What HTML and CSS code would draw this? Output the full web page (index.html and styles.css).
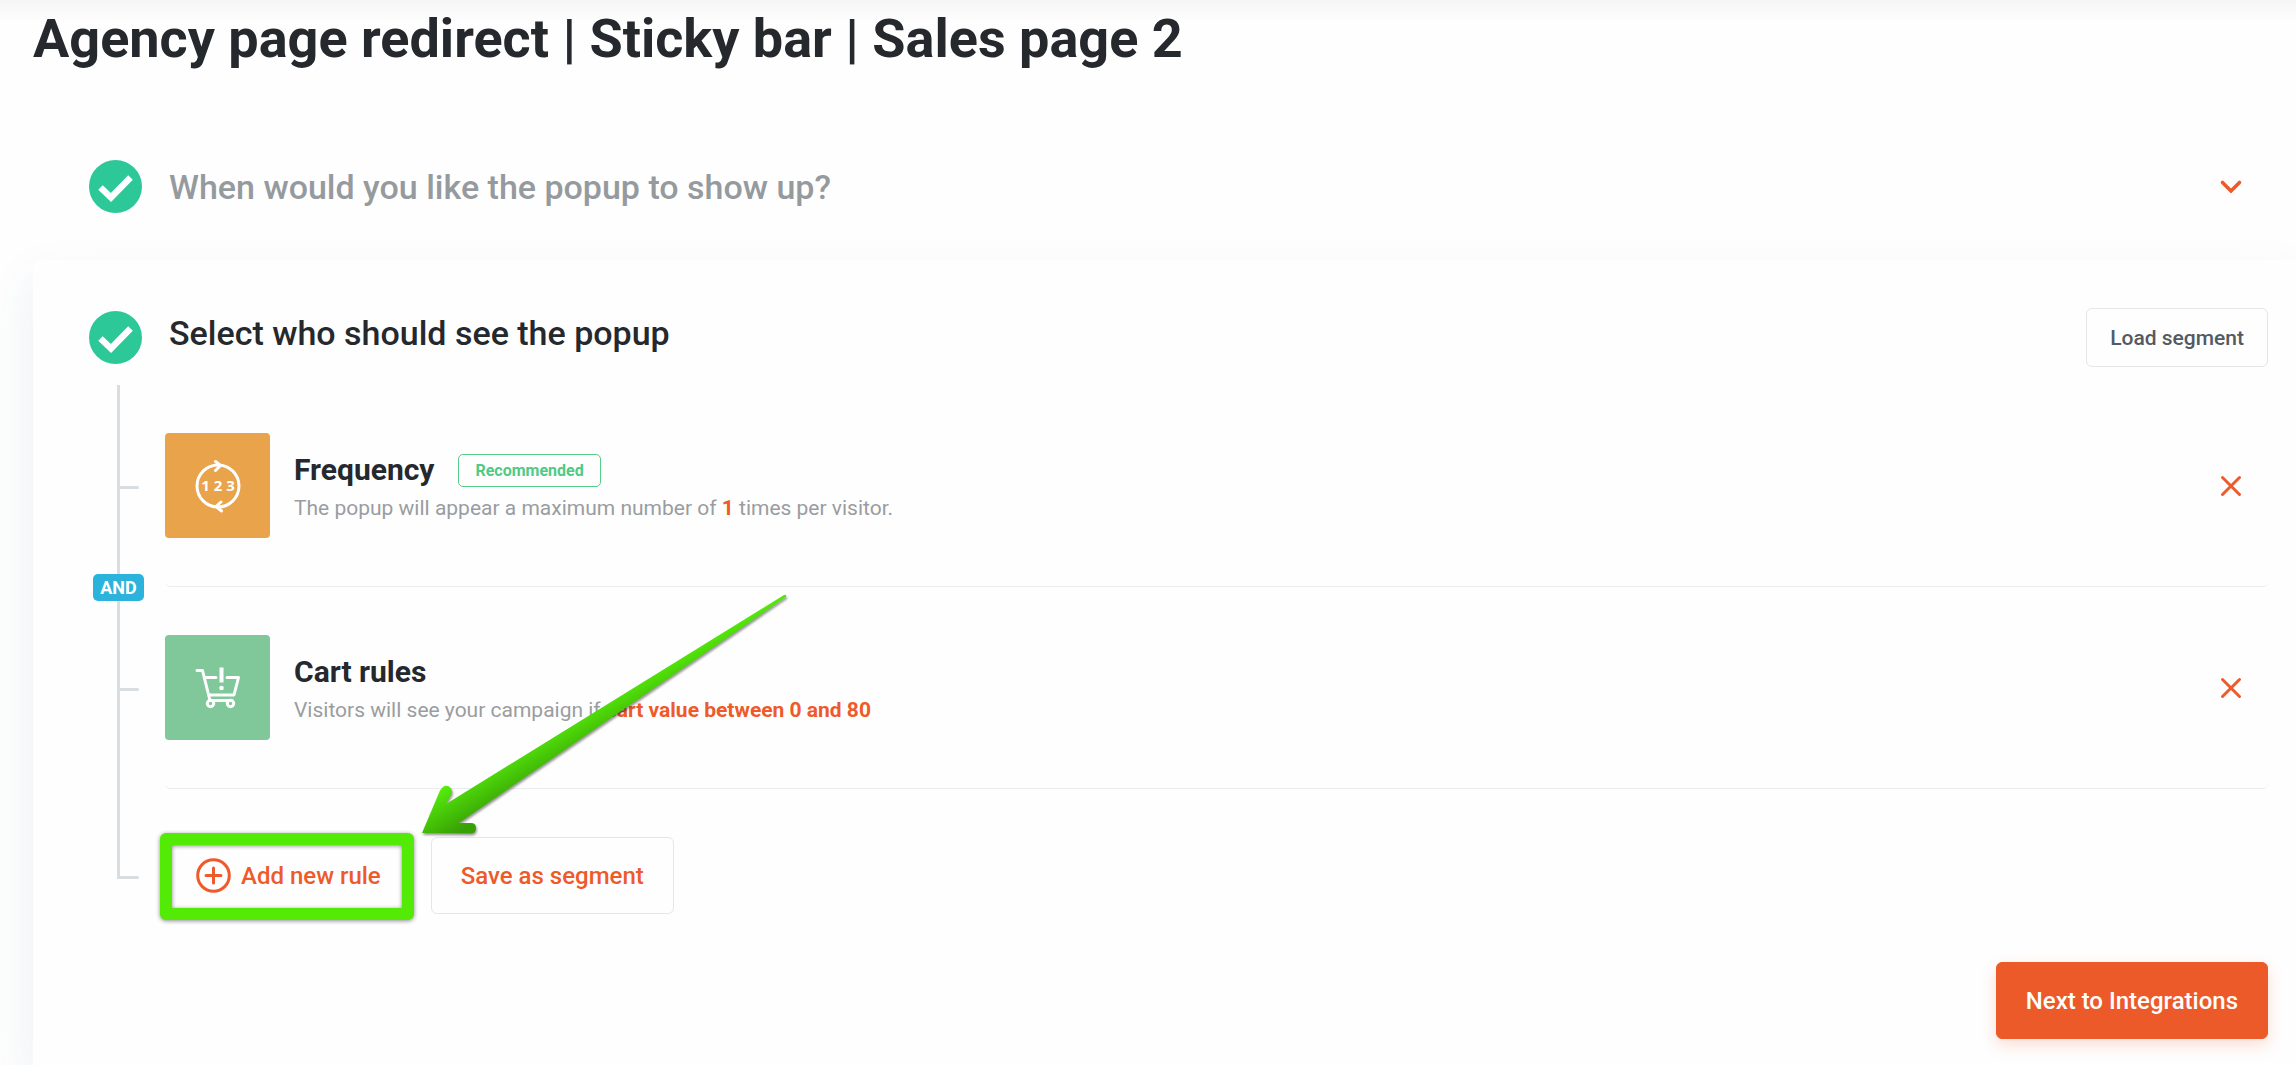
FILE: index.html
```html
<!DOCTYPE html>
<html lang="en">
<head>
  <meta charset="UTF-8">
  <title>Agency page redirect | Sticky bar | Sales page 2</title>
  <link rel="stylesheet" href="styles.css">
</head>
<body>
  <main class="page">
    <h1 class="page-title">Agency page redirect | Sticky bar | Sales page 2</h1>

    <section class="step">
      <svg class="step-check" viewBox="0 0 53 53" aria-hidden="true">
        <circle cx="26.5" cy="26.5" r="26.5" fill="#2dc898"/>
        <path d="M11.5 27.5 22 37.500 41.500 17.500" fill="none" stroke="#fff" stroke-width="6.500"/>
      </svg>
      <h2 class="step-title muted">When would you like the popup to show up?</h2>
      <button class="icon-btn" type="button" aria-label="Expand">
        <svg viewBox="0 0 24 24"><path d="M3.500 7.500 12 16 20.500 7.500" stroke-width="3.600"/></svg>
      </button>
    </section>

    <section class="panel">
      <header class="panel-head">
        <svg class="step-check" viewBox="0 0 53 53" aria-hidden="true">
          <circle cx="26.5" cy="26.5" r="26.5" fill="#2dc898"/>
          <path d="M11.5 27.5 22 37.500 41.500 17.500" fill="none" stroke="#fff" stroke-width="6.500"/>
        </svg>
        <h2 class="step-title">Select who should see the popup</h2>
        <button class="btn btn-small" type="button">Load segment</button>
      </header>

      <div class="rules">
        <article class="rule branch">
          <div class="tile orange">
            <svg viewBox="0 0 60 60" aria-hidden="true">
              <g fill="none" stroke="#fff" stroke-width="3" stroke-linecap="round" stroke-linejoin="round">
                <circle cx="30" cy="30" r="21"/>
                <path d="M27.500 5.500 32.500 9.500 27.500 14.500M33 46 28 50.500 33.500 55"/>
              </g>
              <text x="30" y="35" text-anchor="middle">1 2 3</text>
            </svg>
          </div>
          <div class="rule-text">
            <div class="rule-head">
              <h3>Frequency</h3>
              <span class="badge">Recommended</span>
            </div>
            <p>The popup will appear a maximum number of <strong>1</strong> times per visitor.</p>
          </div>
          <button class="icon-btn" type="button" aria-label="Remove rule">
            <svg viewBox="0 0 24 24"><path d="M3.500 3.500 20.500 20.500M20.500 3.500 3.500 20.500"/></svg>
          </button>
          <span class="and">AND</span>
        </article>

        <article class="rule branch">
          <div class="tile green">
            <svg viewBox="0 0 60 60" aria-hidden="true">
              <g fill="none" stroke="#fff" stroke-width="3" stroke-linecap="round" stroke-linejoin="round">
                <path d="M9 12.500H14.500L22 42.500H44M18 19.500H28M39 19.500H50.500L46 37H21"/>
                <circle cx="22.500" cy="45.500" r="3.200"/>
                <circle cx="42.500" cy="45.500" r="3.200"/>
              </g>
              <path d="M31.500 9.500H35.500V24.500H31.500Z" fill="#fff"/>
              <circle cx="33.500" cy="30" r="2.300" fill="#fff"/>
            </svg>
          </div>
          <div class="rule-text">
            <div class="rule-head">
              <h3>Cart rules</h3>
            </div>
            <p>Visitors will see your campaign if <strong>cart value between 0 and 80</strong></p>
          </div>
          <button class="icon-btn" type="button" aria-label="Remove rule">
            <svg viewBox="0 0 24 24"><path d="M3.500 3.500 20.500 20.500M20.500 3.500 3.500 20.500"/></svg>
          </button>
        </article>

        <div class="actions branch">
          <button class="btn highlighted" type="button">
            <svg class="plus" viewBox="0 0 35 35" aria-hidden="true">
              <circle cx="17.500" cy="17.500" r="15.800"/>
              <path d="M17.500 10V25M10 17.500H25"/>
            </svg>
            Add new rule
          </button>
          <button class="btn" type="button">Save as segment</button>
          <svg class="arrow" viewBox="0 0 380 250" aria-hidden="true">
            <defs>
              <linearGradient id="arrowFill" gradientUnits="userSpaceOnUse" x1="28" y1="198" x2="52" y2="240">
                <stop offset="0" stop-color="#57f00a"/>
                <stop offset="1" stop-color="#38a005"/>
              </linearGradient>
            </defs>
            <path fill="url(#arrowFill)" d="M12 243 30 200.500Q34 194 39 196.500 43 199 41.500 204L36 214 374 5Q377 4 376 7L49 233 61 233Q66 233 66 238 66 243 61 243.500Z"/>
          </svg>
        </div>
      </div>

      <footer class="panel-foot">
        <button class="btn btn-primary" type="button">Next to Integrations</button>
      </footer>
    </section>
  </main>
</body>
</html>
```
FILE: styles.css
```css
*{box-sizing:border-box;}
body{margin:0;background:#fefefe;font-family:Roboto,"Liberation Sans",sans-serif;color:#25282c;}
h1,h2,h3,p{margin:0;}

.page{
  display:flex;
  flex-direction:column;
  min-height:100vh;
  padding:7px 0 0 33px;
  background:linear-gradient(#f6f6f6,#fefefe 23px);
}
.page-title{font-size:54px;line-height:64px;font-weight:700;margin-bottom:42px;}

.step{display:flex;align-items:center;gap:27px;padding:47px 28px 47px 56px;}
.step-check{flex:none;width:53px;height:53px;}
.step-title{flex:1;font-size:34px;line-height:50px;font-weight:500;}
.muted{color:#959a9e;}

.icon-btn{flex:none;width:24px;height:24px;margin-right:25px;padding:0;border:0;background:none;cursor:pointer;}
.icon-btn svg{display:block;fill:none;stroke:#ee5a29;stroke-width:3;stroke-linecap:round;}

.panel{
  flex:1;
  padding:48px 28px 26px 56px;
  background:#fefefe;
  border-top-left-radius:5px;
  box-shadow:0 20px 50px rgba(60,90,140,.09);
}
.panel-head{display:flex;align-items:center;gap:27px;}
.panel-head .step-title{align-self:flex-start;}

.btn{
  display:inline-flex;
  align-items:center;
  gap:10px;
  height:77px;
  padding:0 29px;
  border:1px solid #e4e6e8;
  border-radius:6px;
  background:#fefefe;
  color:#ee5a29;
  font:500 24px Roboto,"Liberation Sans",sans-serif;
  cursor:pointer;
}
.btn-small{height:59px;padding:0 23px;font-size:21px;color:#525a64;}
.btn-primary{border-color:#ed5a29;background:#ed5a29;color:#fff;box-shadow:0 6px 16px rgba(237,90,41,.2);}

/* vertical line that joins the rules */
.rules{position:relative;margin-top:18px;padding-left:76px;}
.rules::before{content:"";position:absolute;left:28px;top:0;bottom:35px;width:3px;background:#d8dde1;}
.branch{position:relative;}
.branch::before{content:"";position:absolute;left:-48px;bottom:35px;width:22px;height:3px;border-radius:0 2px 2px 0;background:#d8dde1;}
.rule.branch::before{bottom:97px;}

.rule{display:flex;align-items:center;gap:24px;padding:48px 0;border-bottom:1px solid #ebecee;border-radius:5px;}
.tile{flex:none;display:flex;align-items:center;justify-content:center;width:105px;height:105px;border-radius:4px;}
.tile svg{width:60px;height:60px;}
.tile text{fill:#fff;font:700 15px "Open Sans",sans-serif;}
.orange{background:#e9a34b;}
.green{background:#80c79a;}
.rule-text{flex:1;padding-bottom:3px;}
.rule-head{display:flex;align-items:center;gap:24px;}
.rule h3{font-size:30px;line-height:48px;font-weight:700;}
.rule p{font-size:21px;line-height:28px;color:#999d9f;}
.rule strong{color:#ee5a29;font-weight:700;}
.badge{padding:0 16px;border:1px solid #56cc8a;border-radius:5px;color:#50ca85;font-size:16px;line-height:31px;font-weight:700;}
.and{
  position:absolute;
  left:-72px;
  bottom:-15px;
  width:51px;
  border-radius:5px;
  background:#2bb3dc;
  color:#fff;
  font-size:18px;
  line-height:27px;
  font-weight:700;
  text-align:center;
}

.actions{display:flex;gap:21px;padding-top:48px;}
.highlighted{position:relative;padding:0 28px 0 30px;}
.highlighted::after{
  content:"";
  position:absolute;
  inset:-5px -5px -7px -6px;
  border:12px solid #53ea06;
  border-radius:6px;
  filter:drop-shadow(0 1px 2px rgba(0,0,0,.45));
}
.plus{width:35px;height:35px;fill:none;stroke:#ee5a29;stroke-width:3;stroke-linecap:round;}
.arrow{
  position:absolute;
  left:245px;
  bottom:74px;
  width:380px;
  height:250px;
  filter:drop-shadow(1px 2px 1px rgba(0,0,0,.4));
  pointer-events:none;
}

.panel-foot{display:flex;justify-content:flex-end;padding-top:48px;}
```
